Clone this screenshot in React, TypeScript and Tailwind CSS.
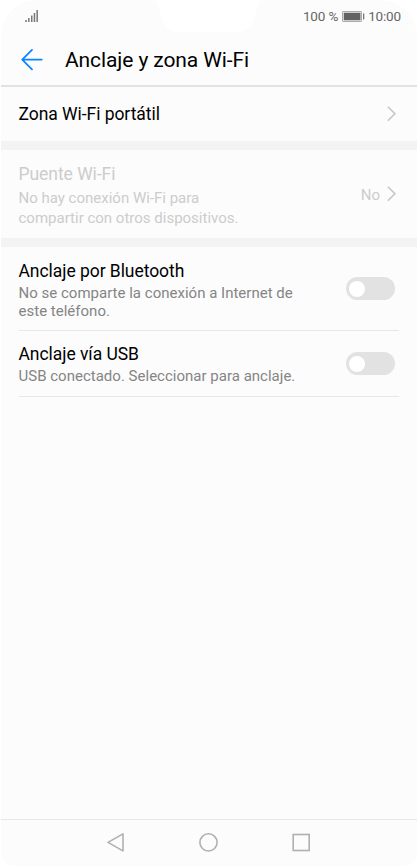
import type { ReactNode } from "react";

export default function App() {
  return (
    <div className="h-[866px] w-[417px] overflow-hidden bg-white pl-px font-['Roboto',sans-serif]">
      <div className="relative flex h-full flex-col overflow-hidden rounded-t-[36px] rounded-b-[14px] bg-[#fcfcfc]">
        <Notch />
        <StatusBar />
        <header className="flex h-[52px] items-center border-b-2 border-[#e2e2e2] pl-5">
          <svg width="22" height="22" viewBox="0 0 22 22" fill="none" stroke="#0a84ff" strokeWidth="1.7" strokeLinecap="round" strokeLinejoin="round">
            <path d="M11 .8 1.2 10.6 11 20.4M1.2 10.6h19.6" />
          </svg>
          <h1 className="ml-[22px] text-[21px] leading-6 tracking-[-0.1px] whitespace-nowrap text-black">Anclaje y zona Wi-Fi</h1>
        </header>

        <main className="flex-1">
          <section className="flex h-[54px] items-center justify-between pr-5 pl-[17.5px]">
            <RowTitle>Zona Wi-Fi portátil</RowTitle>
            <Chevron />
          </section>
          <Separator />
          <section className="flex h-[88px] items-center justify-between pr-5 pl-[17.5px] text-[#cccccc]">
            <div className="pt-0.5">
              <h2 className="text-[17.5px] leading-[25px] tracking-[-0.05px] whitespace-nowrap">Puente Wi-Fi</h2>
              <p className="mt-0.5 text-[15px] leading-[19.5px] whitespace-nowrap">
                No hay conexión Wi-Fi para
                <br />
                compartir con otros dispositivos.
              </p>
            </div>
            <div className="flex items-center gap-[7px]">
              <span className="pt-0.5 text-[15px] leading-5">No</span>
              <Chevron />
            </div>
          </section>
          <Separator />
          <section className="mr-[18px] ml-[17.5px] flex h-[84px] items-center justify-between border-b border-[#e8e8e8] pr-1">
            <div className="pt-[3px]">
              <RowTitle>Anclaje por Bluetooth</RowTitle>
              <Description>
                No se comparte la conexión a Internet de
                <br />
                este teléfono.
              </Description>
            </div>
            <Toggle />
          </section>
          <section className="mr-[18px] ml-[17.5px] flex h-[66px] items-center justify-between border-b border-[#e8e8e8] pr-1">
            <div className="pt-0.5">
              <RowTitle>Anclaje vía USB</RowTitle>
              <Description>USB conectado. Seleccionar para anclaje.</Description>
            </div>
            <Toggle />
          </section>
        </main>

        <NavigationBar />
      </div>
    </div>
  );
}

function Notch() {
  return (
    <svg className="absolute top-0 left-[151px]" width="112" height="33" viewBox="0 0 112 33" fill="#ffffff">
      <path d="M0 0C5 1 7 5 8 10C9 23 15 32 29 32H83C97 32 103 23 104 10C105 5 107 1 112 0Z" />
    </svg>
  );
}

function StatusBar() {
  return (
    <div className="flex h-[35px] shrink-0 justify-between pr-4 pl-6">
      <svg className="mt-[10px]" width="14" height="13" viewBox="0 0 14 13" fill="#777777">
        <rect x="0.3" y="10" width="1.5" height="2" />
        <rect x="3.1" y="8" width="1.5" height="4" />
        <rect x="6" y="5.5" width="1.5" height="6.5" />
        <rect x="8.7" y="3" width="1.5" height="9" />
        <rect x="11.4" y="0" width="1.5" height="12" />
      </svg>
      <div className="mt-2 flex h-4 items-center text-[13.5px] leading-4 tracking-[-0.15px] whitespace-nowrap text-[#666666]">
        <span>100 %</span>
        <svg className="mx-[3.5px]" width="23" height="11" viewBox="0 0 23 11">
          <rect x="0.5" y="0.5" width="19" height="10" rx="0.5" fill="none" stroke="#aaaaaa" />
          <rect x="1.7" y="1.7" width="16.8" height="7.6" fill="#626262" />
          <rect x="21" y="2.5" width="1.3" height="6" fill="#777777" />
        </svg>
        <span>10:00</span>
      </div>
    </div>
  );
}

function RowTitle({ children }: { children: ReactNode }) {
  return <h2 className="text-[17.5px] leading-[22px] tracking-[-0.05px] whitespace-nowrap text-black">{children}</h2>;
}

function Description({ children }: { children: ReactNode }) {
  return <p className="mt-[3px] text-[15px] leading-[17.5px] tracking-[0.01px] whitespace-nowrap text-[#858585]">{children}</p>;
}

function Separator() {
  return <div className="h-[9px] bg-[#f3f3f3]" />;
}

function Chevron() {
  return (
    <svg width="10" height="16" viewBox="0 0 10 16" fill="none" stroke="#c6c6c6" strokeWidth="1.6">
      <path d="m.9.8 7 7-7 7" />
    </svg>
  );
}

function Toggle() {
  return (
    <div className="flex h-[23px] w-[49px] items-center rounded-full bg-[#e2e2e2] pl-[2.5px]">
      <div className="size-4 rounded-full bg-white" />
    </div>
  );
}

function NavigationBar() {
  return (
    <nav className="flex h-[47px] items-center border-t border-[#e8e8e8] pl-[105px]">
      <svg width="20" height="20" viewBox="0 0 20 20" fill="none" stroke="#b0b0b0" strokeWidth="1.6" strokeLinejoin="round">
        <path d="M17 .9v17L2 9.4Z" />
      </svg>
      <svg className="ml-[72px]" width="20" height="20" viewBox="0 0 20 20" fill="none" stroke="#b0b0b0" strokeWidth="1.6">
        <circle cx="10.5" cy="9.4" r="8.6" />
      </svg>
      <svg className="ml-[73px]" width="20" height="20" viewBox="0 0 20 20" fill="none" stroke="#b0b0b0" strokeWidth="1.6">
        <rect x="2.2" y="1.5" width="16" height="16" />
      </svg>
    </nav>
  );
}
